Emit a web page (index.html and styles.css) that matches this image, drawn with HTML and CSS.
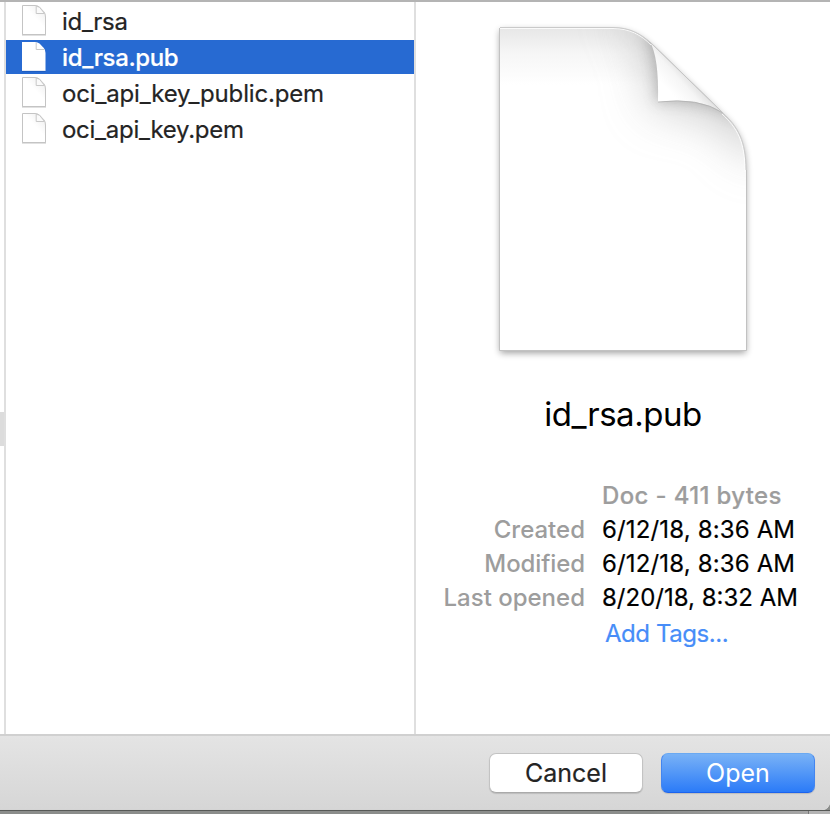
FILE: index.html
```html
<!DOCTYPE html>
<html lang="en">
<head>
<meta charset="utf-8">
<title>Open</title>
<link rel="stylesheet" href="styles.css">
</head>
<body>
<svg class="defs" width="0" height="0" aria-hidden="true">
  <defs>
    <linearGradient id="mini-shade" x1="0.9" y1="0" x2="0.3" y2="0.7">
      <stop offset="0" stop-color="#ececec"/><stop offset="0.6" stop-color="#fff"/>
    </linearGradient>
    <symbol id="doc" viewBox="0 0 26 32">
      <path d="M1.5 1.5H14Q16.8 1.5 18.5 3.2L22.8 7.7Q24.5 9.5 24.5 13V30.5H1.5Z" fill="url(#mini-shade)" stroke="currentColor"/>
      <path d="M1 30.8H25" stroke="currentColor" stroke-width="1.2"/>
      <path d="M15.2 2.200V9.500H23.500L18.5 3.2Z" fill="#fafafa" stroke="#c8c8c8" stroke-width="1"/>
    </symbol>
    <symbol id="doc-selected" viewBox="0 0 26 32">
      <path d="M1 2H14Q16.800 2 18.500 3.500L22.800 8Q24.500 10 24.500 13V31H1Z" fill="#fff"/>
      <path d="M1 31.300H24.500" stroke="#1550b0" stroke-opacity="0.6"/>
      <path d="M15.200 2.500V9.500H23.500" fill="none" stroke="#c8c8c8"/>
    </symbol>
  </defs>
</svg>
<div class="dialog">
  <main class="browser">
    <div class="previous"><div class="previous-selection"></div></div>
    <ul class="files">
      <li class="file"><svg class="icon"><use href="#doc"/></svg><span class="n1">id_rsa</span></li>
      <li class="file selected"><svg class="icon"><use href="#doc-selected"/></svg><span class="n2">id_rsa.pub</span></li>
      <li class="file"><svg class="icon"><use href="#doc"/></svg><span class="n3">oci_api_key_public.pem</span></li>
      <li class="file"><svg class="icon"><use href="#doc"/></svg><span class="n4">oci_api_key.pem</span></li>
    </ul>
    <section class="preview">
      <svg class="page" viewBox="480 10 290 360">
        <defs>
          <linearGradient id="top" x1="0" y1="27" x2="0" y2="85" gradientUnits="userSpaceOnUse">
            <stop offset="0" stop-color="#e6e6e6"/><stop offset="0.45" stop-color="#f6f6f6"/><stop offset="1" stop-color="#fff"/>
          </linearGradient>
          <linearGradient id="curl" x1="669" y1="91" x2="690" y2="72" gradientUnits="userSpaceOnUse">
            <stop offset="0" stop-color="#fff"/><stop offset="0.55" stop-color="#f5f5f5"/><stop offset="1" stop-color="#d9d9d9"/>
          </linearGradient>
          <clipPath id="sheet"><path d="M500 27.500H613C630 27.500 641 34 651 43L723 113C738 127 746 141 746 170V350H500Z"/></clipPath>
          <filter id="soft" x="-100%" y="-100%" width="300%" height="300%"><feGaussianBlur stdDeviation="25"/></filter>
          <filter id="tight" x="-100%" y="-100%" width="300%" height="300%"><feGaussianBlur stdDeviation="7"/></filter>
          <filter id="drop" x="-10%" y="-10%" width="120%" height="120%"><feGaussianBlur stdDeviation="3.500"/></filter>
        </defs>
        <path d="M500 27.500H613C630 27.500 641 34 651 43L723 113C738 127 746 141 746 170V350H500Z" transform="translate(0 3)" fill="#000" opacity="0.38" filter="url(#drop)"/>
        <path d="M500 27.500H613C630 27.500 641 34 651 43L723 113C738 127 746 141 746 170V350H500Z" fill="url(#top)"/>
        <g clip-path="url(#sheet)">
          <path d="M612 14L640 30Q657 57 652 109Q697 103 725 122L760 164L790 90L690 10Z" fill="#999" opacity="0.55" filter="url(#soft)"/>
          <path d="M645 32Q658 57 657 102Q697 98 728 112L738 118L750 100L680 30Z" fill="#777" opacity="0.45" filter="url(#tight)"/>
          <path d="M500 28.500H613C630 28.500 641 35 651 45M722 114C737 128 745 141 745 172" fill="none" stroke="#fff" stroke-opacity="0.8"/>
        </g>
        <path d="M500 27.500H613C630 27.500 641 34 651 43L723 113C738 127 746 141 746 170" fill="none" stroke="#cacaca"/>
        <path d="M499.500 28V350.500H746.500V170" fill="none" stroke="#c2c2c2"/>
        <path d="M650 42Q659 57 658 102Q700 97 723 113Z" fill="url(#curl)"/>
        <path d="M658 102Q699 97 723 113" fill="none" stroke="#b0b0b0" stroke-width="0.800"/>
        <path d="M650 42L723 113" stroke="#c4c4c4"/>
      </svg>
      <h1 class="title">id_rsa.pub</h1>
      <dl class="details">
        <dt></dt><dd class="kind">Doc - 411 bytes</dd>
        <dt>Created</dt><dd class="early">6/12/18, 8:36 AM</dd>
        <dt class="modified">Modified</dt><dd class="early">6/12/18, 8:36 AM</dd>
        <dt>Last opened</dt><dd>8/20/18, 8:32 AM</dd>
        <dt></dt><dd class="tags">Add Tags...</dd>
      </dl>
    </section>
  </main>
  <footer class="actions">
    <button class="button cancel">Cancel</button>
    <button class="button open">Open</button>
  </footer>
</div>
<div class="backdrop"></div>
</body>
</html>
```
FILE: styles.css
```css
* { box-sizing: border-box; }
body { margin: 0; width: 830px; height: 814px; overflow: hidden; background: #8b8d8b; font-family: Inter, "Liberation Sans", sans-serif; font-size: 24px; color: #242424; }
.defs { position: absolute; }
.dialog { height: 810px; border-top: 2px solid #b4b4b4; border-bottom-right-radius: 8px; overflow: hidden; background: #fff; display: flex; flex-direction: column; }
.browser { flex: 1; display: flex; min-height: 0; }
.previous { width: 6px; border-right: 2px solid #dfdfdf; padding-top: 410px; }
.previous-selection { height: 34px; background: #dcdcdc; }
.files { list-style: none; margin: 0; padding: 2px 0 0; width: 408px; display: flex; flex-direction: column; gap: 2px; }
.file { height: 34px; display: flex; align-items: center; padding-left: 15px; gap: 15px; color: #c4c4c4; white-space: nowrap; }
.file span { color: #242424; line-height: 32px; padding-top: 2px; -webkit-text-stroke: 0.2px; }
.n1 { letter-spacing: -0.3px; }
.n2 { letter-spacing: -0.4px; }
.n3 { letter-spacing: -0.17px; }
.n4 { letter-spacing: -0.27px; }
.icon { width: 26px; height: 32px; margin-top: -2px; flex: none; }
.selected { background: #276ad2; color: #fff; }
.file.selected span { color: #fff; font-weight: 500; }
.preview { width: 416px; border-left: 2px solid #dfdfdf; padding-top: 8px; }
.page { display: block; width: 290px; height: 360px; margin-left: 64px; }
.title { margin: 23px 0 0; font-size: 33px; font-weight: 400; line-height: 42px; letter-spacing: -0.45px; text-align: center; color: #000; white-space: nowrap; }
.details { margin: 44px 0 0; display: grid; grid-template-columns: 169px 1fr; column-gap: 17px; grid-auto-rows: 34px; line-height: 34px; white-space: nowrap; }
dt { text-align: right; color: #9d9d9d; font-weight: 500; }
dd { margin: 0; color: #000; -webkit-text-stroke: 0.2px; }
.modified { letter-spacing: -0.1px; }
.early { letter-spacing: 0.15px; }
.kind { color: #9d9d9d; font-weight: 500; letter-spacing: 0.35px; }
.tags { color: #478df8; padding: 2px 0 0 3px; letter-spacing: -0.45px; }
.actions { height: 76px; border-top: 2px solid #d0d0d0; border-bottom: 1px solid #d4d4d4; background: linear-gradient(#e4e4e4, #d6d6d6); display: flex; justify-content: flex-end; gap: 18px; padding: 17px 15px 0 0; }
.button { width: 154px; height: 40px; border-radius: 7px; padding: 0; font: 400 25px/38px Inter, "Liberation Sans", sans-serif; }
.cancel { border: 1px solid #c3c3c3; border-bottom-color: #aaa; background: #fff; color: #242424; box-shadow: 0 1px 1px #0002; -webkit-text-stroke: 0.2px; }
.open { border: 1px solid #4385ef; border-top-color: #6aa9f2; border-bottom-color: #1c63ee; background: linear-gradient(#79b2f6, #2b7bf8); color: #fff; box-shadow: 0 1px 1px #0002; }
.backdrop { height: 4px; border-top: 1px solid #575957; background: linear-gradient(90deg, #8b8d8b 650px, #a6a6a6 808px, #777 808px, #777 809px, #b4b4b4 809px); }
```
